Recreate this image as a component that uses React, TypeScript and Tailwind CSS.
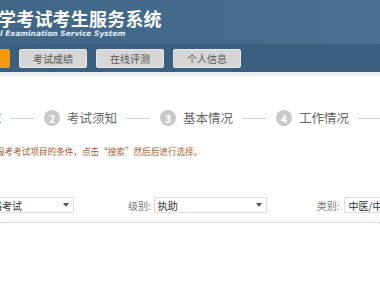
import React from "react";

const font = { fontFamily: '"Noto Sans CJK SC", "Noto Sans", sans-serif' };

function Step({ n, label }: { n: number; label: string }) {
  return (
    <div className="flex items-center shrink-0">
      <div className="w-[16px] h-[16px] rounded-full bg-[#c9c9c9] text-white text-[11px] font-bold flex items-center justify-center leading-none">
        {n}
      </div>
      <div className="ml-[7px] w-[49px] text-[12.5px] text-[#666] leading-none whitespace-nowrap">{label}</div>
    </div>
  );
}

function Line() {
  return <div className="mx-[10px] w-[24px] h-px bg-[#d0d0d0] shrink-0" />;
}

function Arrow() {
  return (
    <svg width="6" height="4" viewBox="0 0 6 4" className="shrink-0">
      <polygon points="0,0 6,0 3,4" fill="#555" />
    </svg>
  );
}

export default function App() {
  return (
    <div className="w-[380px] h-[285px] overflow-hidden bg-white" style={font}>
      {/* header */}
      <div className="h-[44px] bg-gradient-to-r from-[#3f6587] to-[#4a7090] overflow-hidden">
        <div className="pt-[7px] ml-[-2px] text-[18px] font-bold text-white leading-[22px] whitespace-nowrap tracking-[0.2px]">
          学考试考生服务系统
        </div>
        <div
          className="text-[7.5px] font-bold italic text-[#e4ecf3] leading-[10px] whitespace-nowrap"
          style={{ fontFamily: '"DejaVu Sans", sans-serif' }}
        >
          l Examination Service System
        </div>
      </div>
      {/* nav */}
      <div className="h-[28px] bg-[#3b5f7f] flex items-center gap-[9px] ml-[-58px]">
        <div className="w-[68px] h-[19px] rounded-[2px] bg-[#f39a12] shrink-0" />
        {["考试成绩", "在线评测", "个人信息"].map((t) => (
          <div
            key={t}
            className="w-[68px] h-[19px] rounded-[2px] bg-[#d6d6d6] border border-[#e6e6e6] text-[10px] text-[#555] flex items-center justify-center shrink-0"
          >
            {t}
          </div>
        ))}
      </div>
      <div className="h-[4px] bg-[#eceff2]" />
      {/* steps */}
      <div className="mt-[34px] flex items-center ml-[-72px] whitespace-nowrap">
        <Step n={1} label="选择考试" />
        <Line />
        <Step n={2} label="考试须知" />
        <Line />
        <Step n={3} label="基本情况" />
        <Line />
        <Step n={4} label="工作情况" />
        <Line />
      </div>
      {/* instruction */}
      <div className="mt-[19px] ml-[-4px] text-[8.6px] text-[#a45a30] leading-[12px] whitespace-nowrap">
        报考考试项目的条件，点击“搜索”然后后进行选择。
      </div>
      {/* form row */}
      <div className="mt-[40px] flex items-center whitespace-nowrap text-[10px]">
        <div className="ml-[-20px] w-[94px] h-[16px] border border-[#dcdcdc] flex items-center justify-between pl-[1px] pr-[4px] shrink-0">
          <span className="text-[#333]">资格考试</span>
          <Arrow />
        </div>
        <span className="ml-[54px] text-[#777]">级别:</span>
        <div className="ml-[3px] w-[113px] h-[16px] border border-[#dcdcdc] flex items-center justify-between pl-[3px] pr-[4px] shrink-0">
          <span className="text-[#333]">执助</span>
          <Arrow />
        </div>
        <span className="ml-[50px] text-[#777]">类别:</span>
        <div className="ml-[4px] w-[80px] h-[16px] border border-[#dcdcdc] flex items-center pl-[4px] shrink-0">
          <span className="text-[#333]">中医/中医</span>
        </div>
      </div>
      <div className="mt-[9px] border-t border-dotted border-[#c8c8c8]" />
    </div>
  );
}
